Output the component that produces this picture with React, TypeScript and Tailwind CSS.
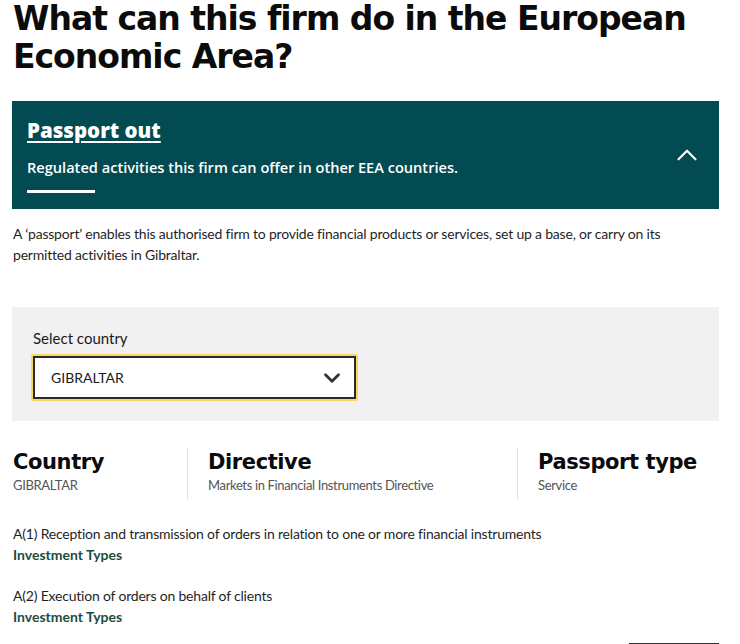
import { ChevronDown, ChevronUp } from "lucide-react";

const activities = [
  "A(1) Reception and transmission of orders in relation to one or more financial instruments",
  "A(2) Execution of orders on behalf of clients",
];

const columns = [
  { title: "Country", value: "GIBRALTAR", width: "w-[175px]" },
  { title: "Directive", value: "Markets in Financial Instruments Directive", width: "w-[330px]" },
  { title: "Passport type", value: "Service", width: "flex-1" },
];

export default function App() {
  return (
    <div className="min-h-[644px] bg-white pl-[12px] pr-[21px] text-[#1a1a1a] font-['Lato',sans-serif] overflow-hidden">
      <h1 className="pl-[1px] text-[33px] leading-[38px] font-bold text-[#0b0b0b] font-['DejaVu_Sans',sans-serif] tracking-[-1px]">
        What can this firm do in the European
        <br />
        Economic Area?
      </h1>

      {/* passport out accordion header */}
      <div className="mt-[25px] h-[108px] bg-[#034b52] pl-[15px] pr-[15px] flex items-start justify-between">
        <div className="pt-[15px]">
          <a href="#" className="block text-[20.5px] leading-[28px] font-extrabold text-white underline underline-offset-[3px] decoration-2 font-['Open_Sans',sans-serif]">
            Passport out
          </a>
          <p className="mt-[14px] text-[14.6px] leading-[18px] font-semibold text-white font-['Open_Sans',sans-serif]">
            Regulated activities this firm can offer in other EEA countries.
          </p>
          <div className="mt-[14px] h-[3px] w-[68px] bg-white" />
        </div>
        <ChevronUp className="mt-[37px] h-[34px] w-[34px] text-white" strokeWidth={1.5} />
      </div>

      <p className="mt-[14px] pl-[1px] text-[14px] leading-[21px] text-[#1f1f1f] tracking-[-0.2px]">
        A ‘passport’ enables this authorised firm to provide financial products or services, set up a base, or carry on its
        <br />
        permitted activities in Gibraltar.
      </p>

      {/* country selector */}
      <div className="mt-[42px] h-[114px] bg-[#f1f1f1] pl-[19px] pt-[21px]">
        <label className="block pl-[2px] text-[15px] leading-[20px] text-[#1a1a1a]">Select country</label>
        <div className="mt-[6px] w-[327px] rounded-[2px] bg-[#f6d862] p-[2px]">
          <div className="flex h-[43px] items-center justify-between border-2 border-[#2a2a2a] bg-white pl-[16px] pr-[9px]">
            <span className="text-[14px] text-[#1a1a1a]">GIBRALTAR</span>
            <ChevronDown className="h-[26px] w-[26px] text-[#333]" strokeWidth={2.6} />
          </div>
        </div>
      </div>

      {/* passport details */}
      <div className="mt-[27px] flex">
        {columns.map((c, i) => (
          <div
            key={c.title}
            className={`${c.width} ${i > 0 ? "border-l border-[#e1e1e1] pl-[20px]" : "pl-[1px]"} pb-[6px]`}
          >
            <h2 className="text-[21px] leading-[28px] font-bold text-[#0b0b0b] font-['DejaVu_Sans',sans-serif] tracking-[-0.4px]">
              {c.title}
            </h2>
            <p className="mt-[0px] text-[13px] leading-[18px] text-[#555] tracking-[-0.35px]">{c.value}</p>
          </div>
        ))}
      </div>

      <div className="mt-[23px] flex flex-col gap-[20px] pl-[1px]">
        {activities.map((a) => (
          <div key={a}>
            <p className="text-[14px] leading-[21px] text-[#1f1f1f] tracking-[-0.2px]">{a}</p>
            <a href="#" className="block text-[14px] leading-[21px] font-bold text-[#1d4d3f]">
              Investment Types
            </a>
          </div>
        ))}
      </div>

      <div className="mt-[16px] flex justify-end">
        <div className="h-[8px] w-[90px] border-t-2 border-[#333]" />
      </div>
    </div>
  );
}
